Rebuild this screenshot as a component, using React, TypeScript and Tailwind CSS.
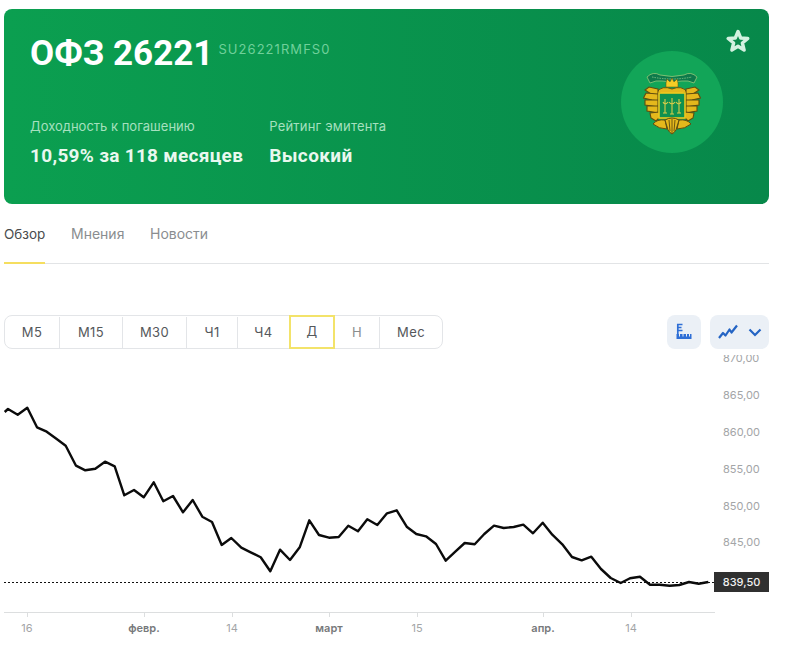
const raw: number[][] = [
  [14,66],[24,57],[53,74],[82,53],[111,112],[140,125],[170,147],[197,167],[228,227],[256,241],[286,236],[315,215],[344,229],[373,316],[402,300],[431,322],[461,277],[490,334],[519,318],[549,367],[578,330],[607,380],[636,396],[665,465],[694,444],[724,473],[752,487],[782,502],[811,544],[840,479],[870,510],[899,472],[928,391],[957,435],[987,443],[1016,441],[1045,407],[1074,424],
];
const raw2: number[][] = [
  [22,388],[52,405],[81,370],[110,361],[140,410],[169,432],[198,439],[228,462],[257,512],[286,485],[314,459],[344,463],[373,432],[402,407],[431,414],[461,411],[490,404],[519,430],[548,398],[577,434],[607,463],[636,501],[665,511],[694,500],[723,537],[752,564],[782,579],[810,565],[840,560],[870,584],[899,584],[929,587],[958,585],[987,576],[1016,581],[1045,576],
];
const CHART_TOP = 355;
const pts = [
  ...raw.map(([x, y]) => [x / 3, 390 + y / 3 - CHART_TOP]),
  ...raw2.map(([x, y]) => [360 + x / 3, 390 + y / 3 - CHART_TOP]),
]
  .map(([x, y]) => `${x.toFixed(1)},${y.toFixed(1)}`)
  .join(" ");

const intervals = [
  { t: "М5", w: "w-[55px]" },
  { t: "М15", w: "w-[63px]" },
  { t: "М30", w: "w-[64px]" },
  { t: "Ч1", w: "w-[51px]" },
  { t: "Ч4", w: "w-[52px]" },
];

const yLabels = [
  ["870,00", 358],
  ["865,00", 395],
  ["860,00", 432],
  ["855,00", 469],
  ["850,00", 506],
  ["845,00", 542],
] as const;

const xLabels = [
  ["16", 27, false],
  ["февр.", 144, true],
  ["14", 232, false],
  ["март", 329, true],
  ["15", 417, false],
  ["апр.", 543, true],
  ["14", 631, false],
] as const;

function Crest() {
  const G = "#e5b81c";
  const D = "#5f4c10";
  return (
    <svg width="58" height="66" viewBox="0 0 58 66">
      <path d="M4 8 Q10 2 17 6 Q29 9 41 6 Q48 2 54 8 L51 14 Q45 11 39 12 Q29 14 19 12 Q13 11 7 14 Z" fill="#0d7a4b" stroke="#a9cf7e" strokeWidth="0.7" />
      <path d="M9 8 Q29 12 49 8" stroke="#8fc98a" strokeWidth="0.8" strokeDasharray="1.5 1" fill="none" />
      <path d="M23 14 L24 10 L27 13 L29 9 L31 13 L34 10 L35 14 L35 18 L23 18 Z" fill="#f4cd25" stroke={D} strokeWidth="0.5" />
      <path d="M14 23 Q19 16 29 20 Q39 16 44 23 L38 25 L20 25 Z" fill={G} stroke={D} strokeWidth="0.9" />
      <g fill={G} stroke={D} strokeWidth="1.1">
        <path d="M15 20 L6 18 L2 21 L8 25 L15 26 Z" />
        <path d="M15 25 L3 24 L0.5 29 L9 31 L15 32 Z" />
        <path d="M15 31 L2 31 L2 36 L9 37 L15 38 Z" />
        <path d="M15 37 L4 37 L4 42 L10 43 L15 44 Z" />
        <path d="M16 43 L7 44 L8 49 L13 52 L17 48 Z" />
        <path d="M43 20 L52 18 L56 21 L50 25 L43 26 Z" />
        <path d="M43 25 L55 24 L57.5 29 L49 31 L43 32 Z" />
        <path d="M43 31 L56 31 L56 36 L49 37 L43 38 Z" />
        <path d="M43 37 L54 37 L54 42 L48 43 L43 44 Z" />
        <path d="M42 43 L51 44 L50 49 L45 52 L41 48 Z" />
      </g>
      <rect x="16" y="24" width="26" height="25" fill="#0f9150" stroke="#eec91f" strokeWidth="1.6" />
      <path d="M22 30 L22 44 M29 29 L29 45 M36 30 L36 44 M20 33 Q22 37 25 33 M26 33 Q29 37 32 33 M33 33 Q36 37 38 33 M20 44 L24 44 M27 45 L31 45 M34 44 L38 44" stroke="#d8cd48" strokeWidth="1.1" fill="none" />
      <g fill={G} stroke={D} strokeWidth="1">
        <path d="M10 55 Q14 50 22 51 L24 60 Q16 60 10 55 Z" />
        <path d="M48 55 Q44 50 36 51 L34 60 Q42 60 48 55 Z" />
        <path d="M22 51 Q29 47 36 51 L33 61 Q31 64 29 65 Q27 64 25 61 Z" />
      </g>
      <path d="M26 51 L27 62 M29 50 L29 64 M32 51 L31 62" stroke={D} strokeWidth="0.9" />
    </svg>
  );
}

export default function App() {
  return (
    <div className="w-[800px] h-[666px] overflow-hidden bg-white pl-1 pr-[31px] pt-[9px] font-['Inter','Liberation_Sans',sans-serif]">
      <section className="relative flex h-[195px] justify-between rounded-lg bg-gradient-to-r from-[#0b9f50] to-[#07884a] pl-[26px] pr-[19px] text-white">
        <div>
          <div className="mt-[24px] flex items-start">
            <h1 className="text-[35px] leading-[42px] font-bold font-['Roboto',sans-serif]">ОФЗ 26221</h1>
            <span className="ml-[5px] mt-[8px] text-[13px] leading-[16px] tracking-[1.05px] text-[#6fd09a]">SU26221RMFS0</span>
          </div>
          <div className="mt-[42px] flex gap-[26px]">
            <div>
              <div className="text-[13px] leading-[18px] text-[#a6e0bf]">Доходность к погашению</div>
              <div className="mt-[10px] text-[19px] leading-[22px] tracking-[0.3px] font-bold font-['Roboto',sans-serif] text-[#e9f8ef]">10,59% за 118 месяцев</div>
            </div>
            <div>
              <div className="text-[13px] leading-[18px] tracking-[0.2px] text-[#a6e0bf]">Рейтинг эмитента</div>
              <div className="mt-[10px] text-[19px] leading-[22px] tracking-[0.4px] font-bold font-['Roboto',sans-serif] text-[#e9f8ef]">Высокий</div>
            </div>
          </div>
        </div>
        <div className="relative flex items-start">
          <div className="mt-[42px] mr-[3px] flex h-[102px] w-[102px] items-center justify-center rounded-full bg-[#12a558]">
            <Crest />
          </div>
          <svg className="mt-[20px]" width="24" height="24" viewBox="0 0 24 24">
            <path d="M12 2.5 L14.7 9 L21.8 9.5 L16.4 14 L18.1 21 L12 17.3 L5.9 21 L7.6 14 L2.2 9.5 L9.3 9 Z" fill="#0b8a4c" stroke="#d3f1e0" strokeWidth="3.4" strokeLinejoin="round" />
          </svg>
        </div>
      </section>

      <nav className="flex h-[60px] gap-[26px] border-b border-[#e2e4e6] text-[14px] text-[#8a8d90]">
        <div className="relative w-[41px] pt-[21px] text-[13.5px] leading-[18px] text-[#4a4c4e]">
          Обзор
          <div className="absolute -bottom-px left-0 right-0 h-[2px] bg-[#f5de5f]" />
        </div>
        <div className="w-[53px] pt-[21px] leading-[18px]">Мнения</div>
        <div className="pt-[21px] leading-[18px]">Новости</div>
      </nav>

      <div className="mt-[51px] flex h-[34px] justify-between">
        <div className="flex h-[34px] w-[439px] rounded-lg border border-[#e3e5e8] pt-px text-[13px] tracking-[0.4px] text-[#55585b]">
          {intervals.map((i) => (
            <div key={i.t} className={`${i.w} flex items-center justify-center border-r border-[#e3e5e8]`}>
              {i.t}
            </div>
          ))}
          <div className="-mb-px -ml-px -mt-[2px] flex w-[46px] items-center justify-center border-2 border-[#f3e36a] text-[#55585b]">Д</div>
          <div className="flex w-[45px] items-center justify-center border-r border-[#e3e5e8] text-[#8a8d8d]">Н</div>
          <div className="flex flex-1 items-center justify-center">Мес</div>
        </div>
        <div className="flex gap-[9px]">
          <div className="flex h-[34px] w-[34px] items-center justify-center rounded-lg bg-[#ebf0f6]">
            <svg width="18" height="18" viewBox="0 0 18 18" fill="none">
              <path d="M2 1.5 H7.5 M2 4.5 H6.5 M2 7.5 H7.5 M2.8 1 V11" stroke="#2f6fd6" strokeWidth="1.7" />
              <path d="M1.5 11 H16.5 V16 H1.5 Z" fill="#2f6fd6" />
              <path d="M4.5 11 V13.5 M8 11 V13.5 M11.5 11 V13.5 M14.5 11 V13.5" stroke="#ebf0f6" strokeWidth="1" />
            </svg>
          </div>
          <div className="flex h-[34px] w-[59px] items-center justify-center gap-[10px] rounded-lg bg-[#ebf0f6]">
            <svg width="20" height="16" viewBox="0 0 20 16" fill="none">
              <path d="M1 14 L5 9 L7.5 11.5 L11.5 5.5 L13.5 8.5 L19 1.5" stroke="#2464c4" strokeWidth="2.2" strokeLinejoin="round" />
            </svg>
            <svg width="14" height="9" viewBox="0 0 14 9" fill="none">
              <path d="M1.5 1.5 L7 7 L12.5 1.5" stroke="#2464c4" strokeWidth="2.2" />
            </svg>
          </div>
        </div>
      </div>

      <div className="relative mt-[6px] h-[295px] w-[796px] -ml-1 overflow-hidden">
        <svg className="absolute left-0 top-0" width="796" height="295" viewBox="0 0 796 295" fill="none">
          <line x1="4" y1="227.5" x2="714" y2="227.5" stroke="#111" strokeWidth="1" strokeDasharray="2 2" />
          <polyline points={pts} stroke="#0b0b0b" strokeWidth="2.4" strokeLinejoin="round" />
          <line x1="4" y1="257.5" x2="715" y2="257.5" stroke="#dcdedf" />
          {xLabels.map(([, x], i) => (
            <line key={i} x1={x + 0.5} y1="258" x2={x + 0.5} y2="262" stroke="#dcdedf" />
          ))}
        </svg>
        {yLabels.map(([t, y]) => (
          <span key={t} className="absolute left-[723px] text-[11px] leading-[14px] text-[#a3a5a7]" style={{ top: y - CHART_TOP - 7 }}>
            {t}
          </span>
        ))}
        <div className="absolute left-[714px] top-[217px] flex h-[20px] w-[55px] items-center justify-center bg-[#303030] text-[11px] font-medium text-[#f1f1f1]">
          839,50
        </div>
        {xLabels.map(([t, x, bold]) => (
          <span
            key={`${t}${x}`}
            className={`absolute w-[50px] -translate-x-1/2 text-center text-[11px] leading-[14px] ${bold ? "font-semibold text-[#77797b]" : "text-[#a3a5a7]"}`}
            style={{ left: x, top: 266 }}
          >
            {t}
          </span>
        ))}
      </div>
    </div>
  );
}
